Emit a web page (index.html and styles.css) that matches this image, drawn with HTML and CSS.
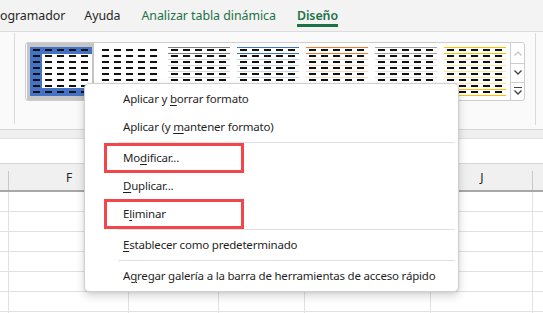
FILE: index.html
```html
<!DOCTYPE html>
<html lang="es">
<head>
  <meta charset="UTF-8" />
  <title>Diseño de tabla dinámica</title>
  <link rel="stylesheet" href="styles.css">
</head>
<body>
  <!-- piezas comunes de las miniaturas de estilo -->
  <svg class="defs" width="0" height="0" aria-hidden="true">
    <defs>
      <g id="dash-rows" stroke="#111" stroke-width="2" stroke-dasharray="7 5">
        <line x1="3" y1="4" x2="62" y2="4" />
        <line x1="3" y1="10" x2="62" y2="10" />
        <line x1="3" y1="16" x2="62" y2="16" />
        <line x1="3" y1="22" x2="62" y2="22" />
        <line x1="3" y1="28" x2="62" y2="28" />
        <line x1="3" y1="34" x2="62" y2="34" />
        <line x1="3" y1="40" x2="62" y2="40" />
        <line x1="3" y1="46" x2="62" y2="46" />
      </g>
      <g id="strong-lines" stroke-width="1">
        <line x1="0" y1="1.5" x2="62" y2="1.5" />
        <line x1="0" y1="7.5" x2="62" y2="7.5" />
        <line x1="0" y1="43.5" x2="62" y2="43.5" />
        <line x1="0" y1="49.5" x2="62" y2="49.5" />
      </g>
      <g id="light-lines" stroke-width="1">
        <line x1="0" y1="13.5" x2="62" y2="13.5" />
        <line x1="0" y1="19.5" x2="62" y2="19.5" />
        <line x1="0" y1="25.5" x2="62" y2="25.5" />
        <line x1="0" y1="31.5" x2="62" y2="31.5" />
        <line x1="0" y1="37.5" x2="62" y2="37.5" />
      </g>
    </defs>
  </svg>

  <div class="app">
    <div class="tabs">
      <span class="tab first">ogramador</span>
      <span class="tab">Ayuda</span>
      <span class="tab ctx">Analizar tabla dinámica</span>
      <span class="tab ctx active">Diseño</span>
    </div>

    <div class="ribbon">
      <div class="group-prev"></div>
      <div class="group">
        <div class="gallery">
          <div class="styles">
            <div class="style-item selected">
              <svg class="thumb" viewBox="0 0 62 52">
                <rect x="0" y="1" width="62" height="49" fill="#4472c4" />
                <rect x="12" y="8" width="50" height="34" fill="#fff" />
                <use href="#dash-rows" />
              </svg>
            </div>
            <div class="style-item">
              <svg class="thumb" viewBox="0 0 62 52">
                <use href="#dash-rows" />
              </svg>
            </div>
            <div class="style-item">
              <svg class="thumb" viewBox="0 0 62 52">
                <use href="#light-lines" stroke="#d9d9d9" />
                <use href="#strong-lines" stroke="#7f7f7f" />
                <use href="#dash-rows" />
              </svg>
            </div>
            <div class="style-item">
              <svg class="thumb" viewBox="0 0 62 52">
                <use href="#light-lines" stroke="#c9d6ee" />
                <use href="#strong-lines" stroke="#4472c4" />
                <use href="#dash-rows" />
              </svg>
            </div>
            <div class="style-item">
              <svg class="thumb" viewBox="0 0 62 52">
                <use href="#light-lines" stroke="#fbd9c6" />
                <use href="#strong-lines" stroke="#ed7d31" />
                <use href="#dash-rows" />
              </svg>
            </div>
            <div class="style-item">
              <svg class="thumb" viewBox="0 0 62 52">
                <use href="#light-lines" stroke="#e4e4e4" />
                <use href="#strong-lines" stroke="#a5a5a5" />
                <use href="#dash-rows" />
              </svg>
            </div>
            <div class="style-item">
              <svg class="thumb" viewBox="0 0 62 52">
                <use href="#light-lines" stroke="#ffe8a6" />
                <use href="#strong-lines" stroke="#ffc000" />
                <use href="#dash-rows" />
              </svg>
            </div>
          </div>
          <div class="scroll">
            <div class="scroll-btn up">
              <svg width="8" height="5" viewBox="0 0 8 5"><path d="M0.5 4.5 L4 1 L7.5 4.5" fill="none" stroke="#c2c2c2" stroke-width="1.2" /></svg>
            </div>
            <div class="scroll-btn">
              <svg width="8" height="5" viewBox="0 0 8 5"><path d="M0.5 0.5 L4 4 L7.5 0.5" fill="none" stroke="#444" stroke-width="1.4" /></svg>
            </div>
            <div class="scroll-btn">
              <svg width="8" height="8" viewBox="0 0 8 8"><path d="M0 0.5 H8" stroke="#444" stroke-width="1" /><path d="M0.5 3.5 L4 7 L7.5 3.5" fill="none" stroke="#444" stroke-width="1.4" /></svg>
            </div>
          </div>
        </div>
      </div>
      <div class="group-next"></div>
    </div>

    <div class="band"></div>
    <div class="formula-bar"></div>

    <!-- G, H e I quedan tapadas por el menú -->
    <div class="col-heads">
      <div class="cell c-row"></div>
      <div class="cell c-f">F</div>
      <div class="cell c-g"></div>
      <div class="cell c-h"></div>
      <div class="cell c-i"></div>
      <div class="cell c-j">J</div>
      <div class="cell c-k"></div>
    </div>
    <div class="sheet">
      <div class="col c-row"></div>
      <div class="col c-f"></div>
      <div class="col c-g"></div>
      <div class="col c-h"></div>
      <div class="col c-i"></div>
      <div class="col c-j"></div>
      <div class="col c-k"></div>
    </div>

    <div class="menu">
      <div class="item">Aplicar y <u>b</u>orrar formato</div>
      <div class="item">Aplicar (y <u>m</u>antener formato)</div>
      <div class="sep"></div>
      <div class="item marked">Mo<u>d</u>ificar...</div>
      <div class="item"><u>D</u>uplicar...</div>
      <div class="item marked">E<u>l</u>iminar</div>
      <div class="sep"></div>
      <div class="item"><u>E</u>stablecer como predeterminado</div>
      <div class="sep"></div>
      <div class="item">A<u>g</u>regar galería a la barra de herramientas de acceso rápido</div>
    </div>
  </div>
</body>
</html>
```

FILE: styles.css
```css
* {
  box-sizing: border-box;
}

body {
  margin: 0;
  background: #fff;
  font-family: "Noto Sans", "Liberation Sans", sans-serif;
  color: #262626;
}

.defs {
  position: absolute;
  width: 0;
  height: 0;
}

.app {
  position: relative;
  width: 543px;
  height: 313px;
  overflow: hidden;
  display: flex;
  flex-direction: column;
}

/* pestañas */
.tabs {
  height: 32px;
  flex: none;
  display: flex;
  align-items: flex-start;
  gap: 21px;
  padding-top: 7px;
  background: #f3f3f3;
  border-bottom: 1px solid #dcdcdc;
  font-size: 12.4px;
  letter-spacing: -0.05px;
  white-space: nowrap;
}

.tab {
  line-height: 17px;
}

.tab.first {
  margin-right: -2px;
}

.tab.ctx {
  color: #1b7244;
}

.tab.active {
  font-weight: 600;
  border-bottom: 3px solid #1b7244;
}

/* cinta */
.ribbon {
  height: 98px;
  flex: none;
  display: flex;
  background: #fafafa;
  border-bottom: 1px solid #d6d6d6;
}

.group-prev {
  width: 15px;
  height: 91px;
  margin-top: 1px;
  border-right: 1px solid #dadada;
}

.group {
  width: 521px;
  height: 92px;
  margin-top: 1px;
  padding: 9px 0 0 10px;
  border-right: 1px solid #dadada;
}

.gallery {
  width: 500px;
  height: 59px;
  display: flex;
  background: #fff;
  border: 1px solid #cdcdcd;
  border-radius: 3px;
}

.styles {
  flex: 1;
  display: flex;
}

.style-item {
  width: 67px;
  height: 57px;
  margin: 0 1px;
  padding: 3px 0 0 3px;
}

.style-item.selected {
  background: #c6c6c6;
}

.thumb {
  display: block;
  width: 62px;
  height: 52px;
}

.scroll {
  width: 14px;
  display: flex;
  flex-direction: column;
  border-left: 1px solid #cdcdcd;
}

.scroll-btn {
  flex: 1;
  display: flex;
  align-items: center;
  justify-content: center;
  border-bottom: 1px solid #cdcdcd;
}

.scroll-btn.up {
  flex: 1.15;
}

.scroll-btn:last-child {
  border-bottom: none;
}

/* zona de la hoja */
.band {
  height: 8px;
  flex: none;
  background: #efefef;
}

.formula-bar {
  height: 26px;
  flex: none;
  background: #fff;
  border-top: 1px solid #e0e0e0;
  border-bottom: 1px solid #d6d6d6;
}

.col-heads,
.sheet {
  display: flex;
  flex: none;
}

.col-heads {
  height: 28px;
  background: #f0f0f0;
  border-bottom: 2px solid #a8a8a8;
}

.cell {
  display: flex;
  align-items: flex-end;
  justify-content: center;
  padding-bottom: 4px;
  font-size: 12px;
  color: #222;
  background: linear-gradient(#c8c8c8, #c8c8c8) right bottom / 1px 19px no-repeat;
}

.sheet {
  flex: 1;
  background: #fff;
}

.col {
  border-right: 1px solid #e1e1e1;
  background: repeating-linear-gradient(to bottom, transparent 0 19px, #e1e1e1 19px 20px);
}

.c-row { width: 9px; }
.c-f { width: 120px; }
.c-g { width: 90px; }
.c-h { width: 86px; }
.c-i { width: 126px; }
.c-j { width: 102px; }
.cell.c-k { flex: 1; background: none; }
.col.c-k { flex: 1; border-right: none; }

/* menú contextual */
.menu {
  position: absolute;
  left: 84px;
  top: 83px;
  width: 375px;
  padding: 1px 0;
  background: #fff;
  border: 1px solid #cfcfcf;
  border-radius: 5px;
  box-shadow: 0 4px 10px rgba(0, 0, 0, 0.16), 0 1px 3px rgba(0, 0, 0, 0.08);
  font-size: 11.5px;
  letter-spacing: -0.2px;
  color: #1f1f1f;
}

.item {
  position: relative;
  height: 28px;
  line-height: 28px;
  padding-left: 38px;
  white-space: nowrap;
}

.item u {
  text-underline-offset: 2px;
}

.item.marked::after {
  content: "";
  position: absolute;
  left: 19px;
  width: 134px;
  top: -1px;
  bottom: -1px;
  border: 3px solid #f2464b;
}

.sep {
  height: 1px;
  margin: 1px 3px 1px 33px;
  background: #e0e0e0;
}
```
